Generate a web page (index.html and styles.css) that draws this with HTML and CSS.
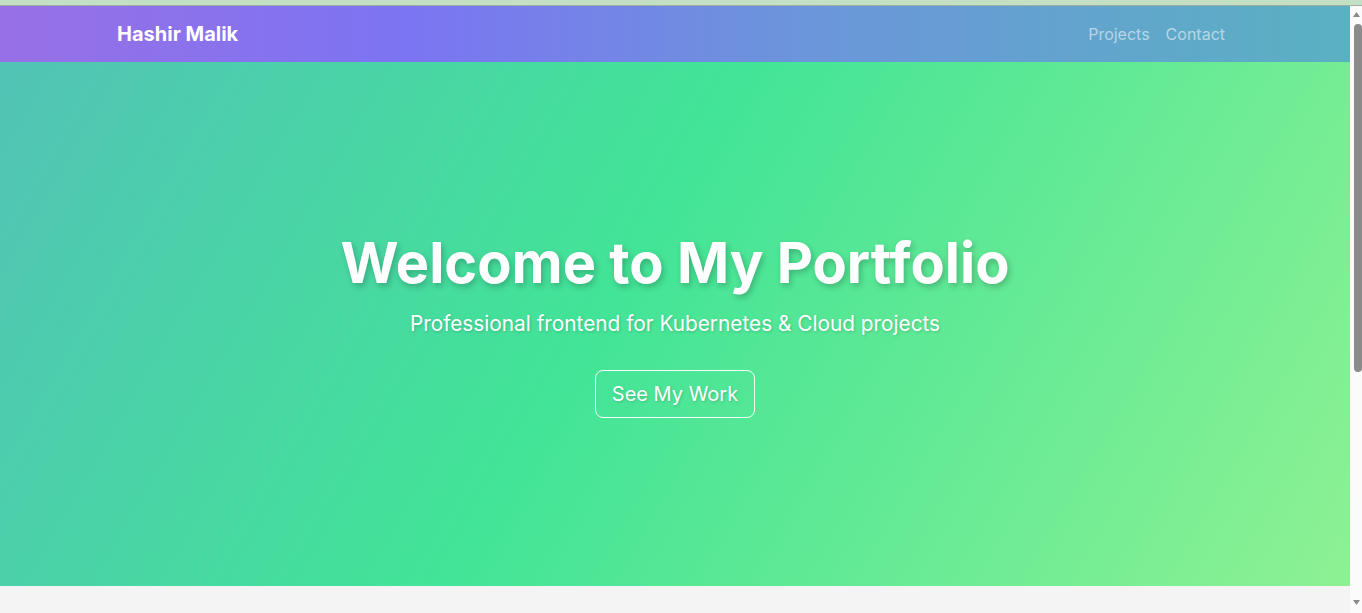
FILE: index.html
```html
<!DOCTYPE html>
<html lang="en">
<head>
<meta charset="utf-8">
<title>Hashir Malik — Portfolio</title>
<link rel="stylesheet" href="styles.css">
</head>
<body>
<div class="window">
  <div class="top-strip"></div>
  <div class="viewport">
    <div class="page">
      <nav class="navbar">
        <div class="container nav-inner">
          <a class="brand" href="#">Hashir Malik</a>
          <ul class="nav-links">
            <li><a class="nav-link" href="#projects">Projects</a></li>
            <li><a class="nav-link" href="#contact">Contact</a></li>
          </ul>
        </div>
      </nav>
      <header class="hero">
        <h1 class="hero-title">Welcome to My Portfolio</h1>
        <p class="hero-lead">Professional frontend for Kubernetes &amp; Cloud projects</p>
        <a class="btn-outline" href="#projects">See My Work</a>
      </header>
      <section class="projects" id="projects"></section>
    </div>
    <div class="scrollbar" aria-hidden="true">
      <svg class="sb-arrow sb-up" width="7" height="5" viewBox="0 0 7 5"><path d="M3.5 0L7 5H0z" fill="#8a8a8a"/></svg>
      <div class="sb-thumb"></div>
      <div class="sb-spacer"></div>
      <svg class="sb-arrow sb-down" width="7" height="5" viewBox="0 0 7 5"><path d="M0 0H7L3.5 5z" fill="#8a8a8a"/></svg>
    </div>
  </div>
</div>
</body>
</html>
```

FILE: styles.css
```css
* { box-sizing: border-box; }

html, body {
  margin: 0;
  height: 100%;
  overflow: hidden;
}

body {
  font-family: Inter, "Noto Sans", "Liberation Sans", sans-serif;
  color: #212529;
  background: #f4f4f4;
}

.window {
  height: 100%;
  display: flex;
  flex-direction: column;
}

.top-strip {
  flex: 0 0 6px;
  background: #c4e0c4;
  border-bottom: 1px solid #9eaea0;
}

.viewport {
  flex: 1;
  min-height: 0;
  display: flex;
}

.page {
  flex: 1;
  min-width: 0;
  overflow: hidden;
  background: #f4f4f4;
}

.scrollbar {
  flex: 0 0 12px;
  display: flex;
  flex-direction: column;
  align-items: flex-end;
  background: #fbfbfb;
}

.sb-arrow {
  display: block;
  margin-right: 2px;
}
.sb-up { margin-top: 6px; margin-bottom: 7px; }
.sb-down { margin-bottom: 8px; }

.sb-thumb {
  width: 8px;
  height: 348px;
  background: #8b8b8b;
  border-radius: 4px;
}

.sb-spacer { flex: 1; }

.container {
  width: 1140px;
  max-width: 100%;
  margin: 0 auto;
  padding: 0 12px;
}

.navbar {
  padding: 8px 0;
  background: linear-gradient(90deg, #9870e6 0%, #7c74f2 30%, #6b96da 60%, #5ab1c1 100%);
}

.nav-inner {
  display: flex;
  align-items: center;
  justify-content: space-between;
}

.brand {
  color: #fff;
  font-weight: 700;
  font-size: 20px;
  line-height: 30px;
  padding: 5px 0;
  text-decoration: none;
}

.nav-links {
  list-style: none;
  margin: 0;
  padding: 0;
  display: flex;
}

.nav-link {
  display: block;
  padding: 8px;
  font-size: 16px;
  line-height: 24px;
  color: rgba(255, 255, 255, 0.55);
  text-decoration: none;
}

.hero {
  height: 524px;
  display: flex;
  flex-direction: column;
  align-items: center;
  justify-content: center;
  text-align: center;
  color: #fff;
  background: linear-gradient(120deg, #52c3b6 0%, #42e497 45%, #8ef193 100%);
}

.hero-title {
  margin: 0 0 12px;
  font-size: 56px;
  line-height: 1.2;
  font-weight: 700;
  text-shadow: 2px 3px 6px rgba(0, 0, 0, 0.22);
}

.hero-lead {
  margin: 0 0 31px;
  font-size: 20.8px;
  line-height: 30px;
  font-weight: 400;
  text-shadow: 1px 1px 3px rgba(0, 0, 0, 0.18);
}

.btn-outline {
  display: inline-block;
  padding: 8px 16px;
  font-size: 20px;
  line-height: 30px;
  color: #fff;
  border: 1px solid rgba(255, 255, 255, 0.95);
  border-radius: 8px;
  text-decoration: none;
  text-shadow: 1px 1px 3px rgba(0, 0, 0, 0.18);
}

.projects {
  height: 428px;
  background: #f4f4f4;
}
```
